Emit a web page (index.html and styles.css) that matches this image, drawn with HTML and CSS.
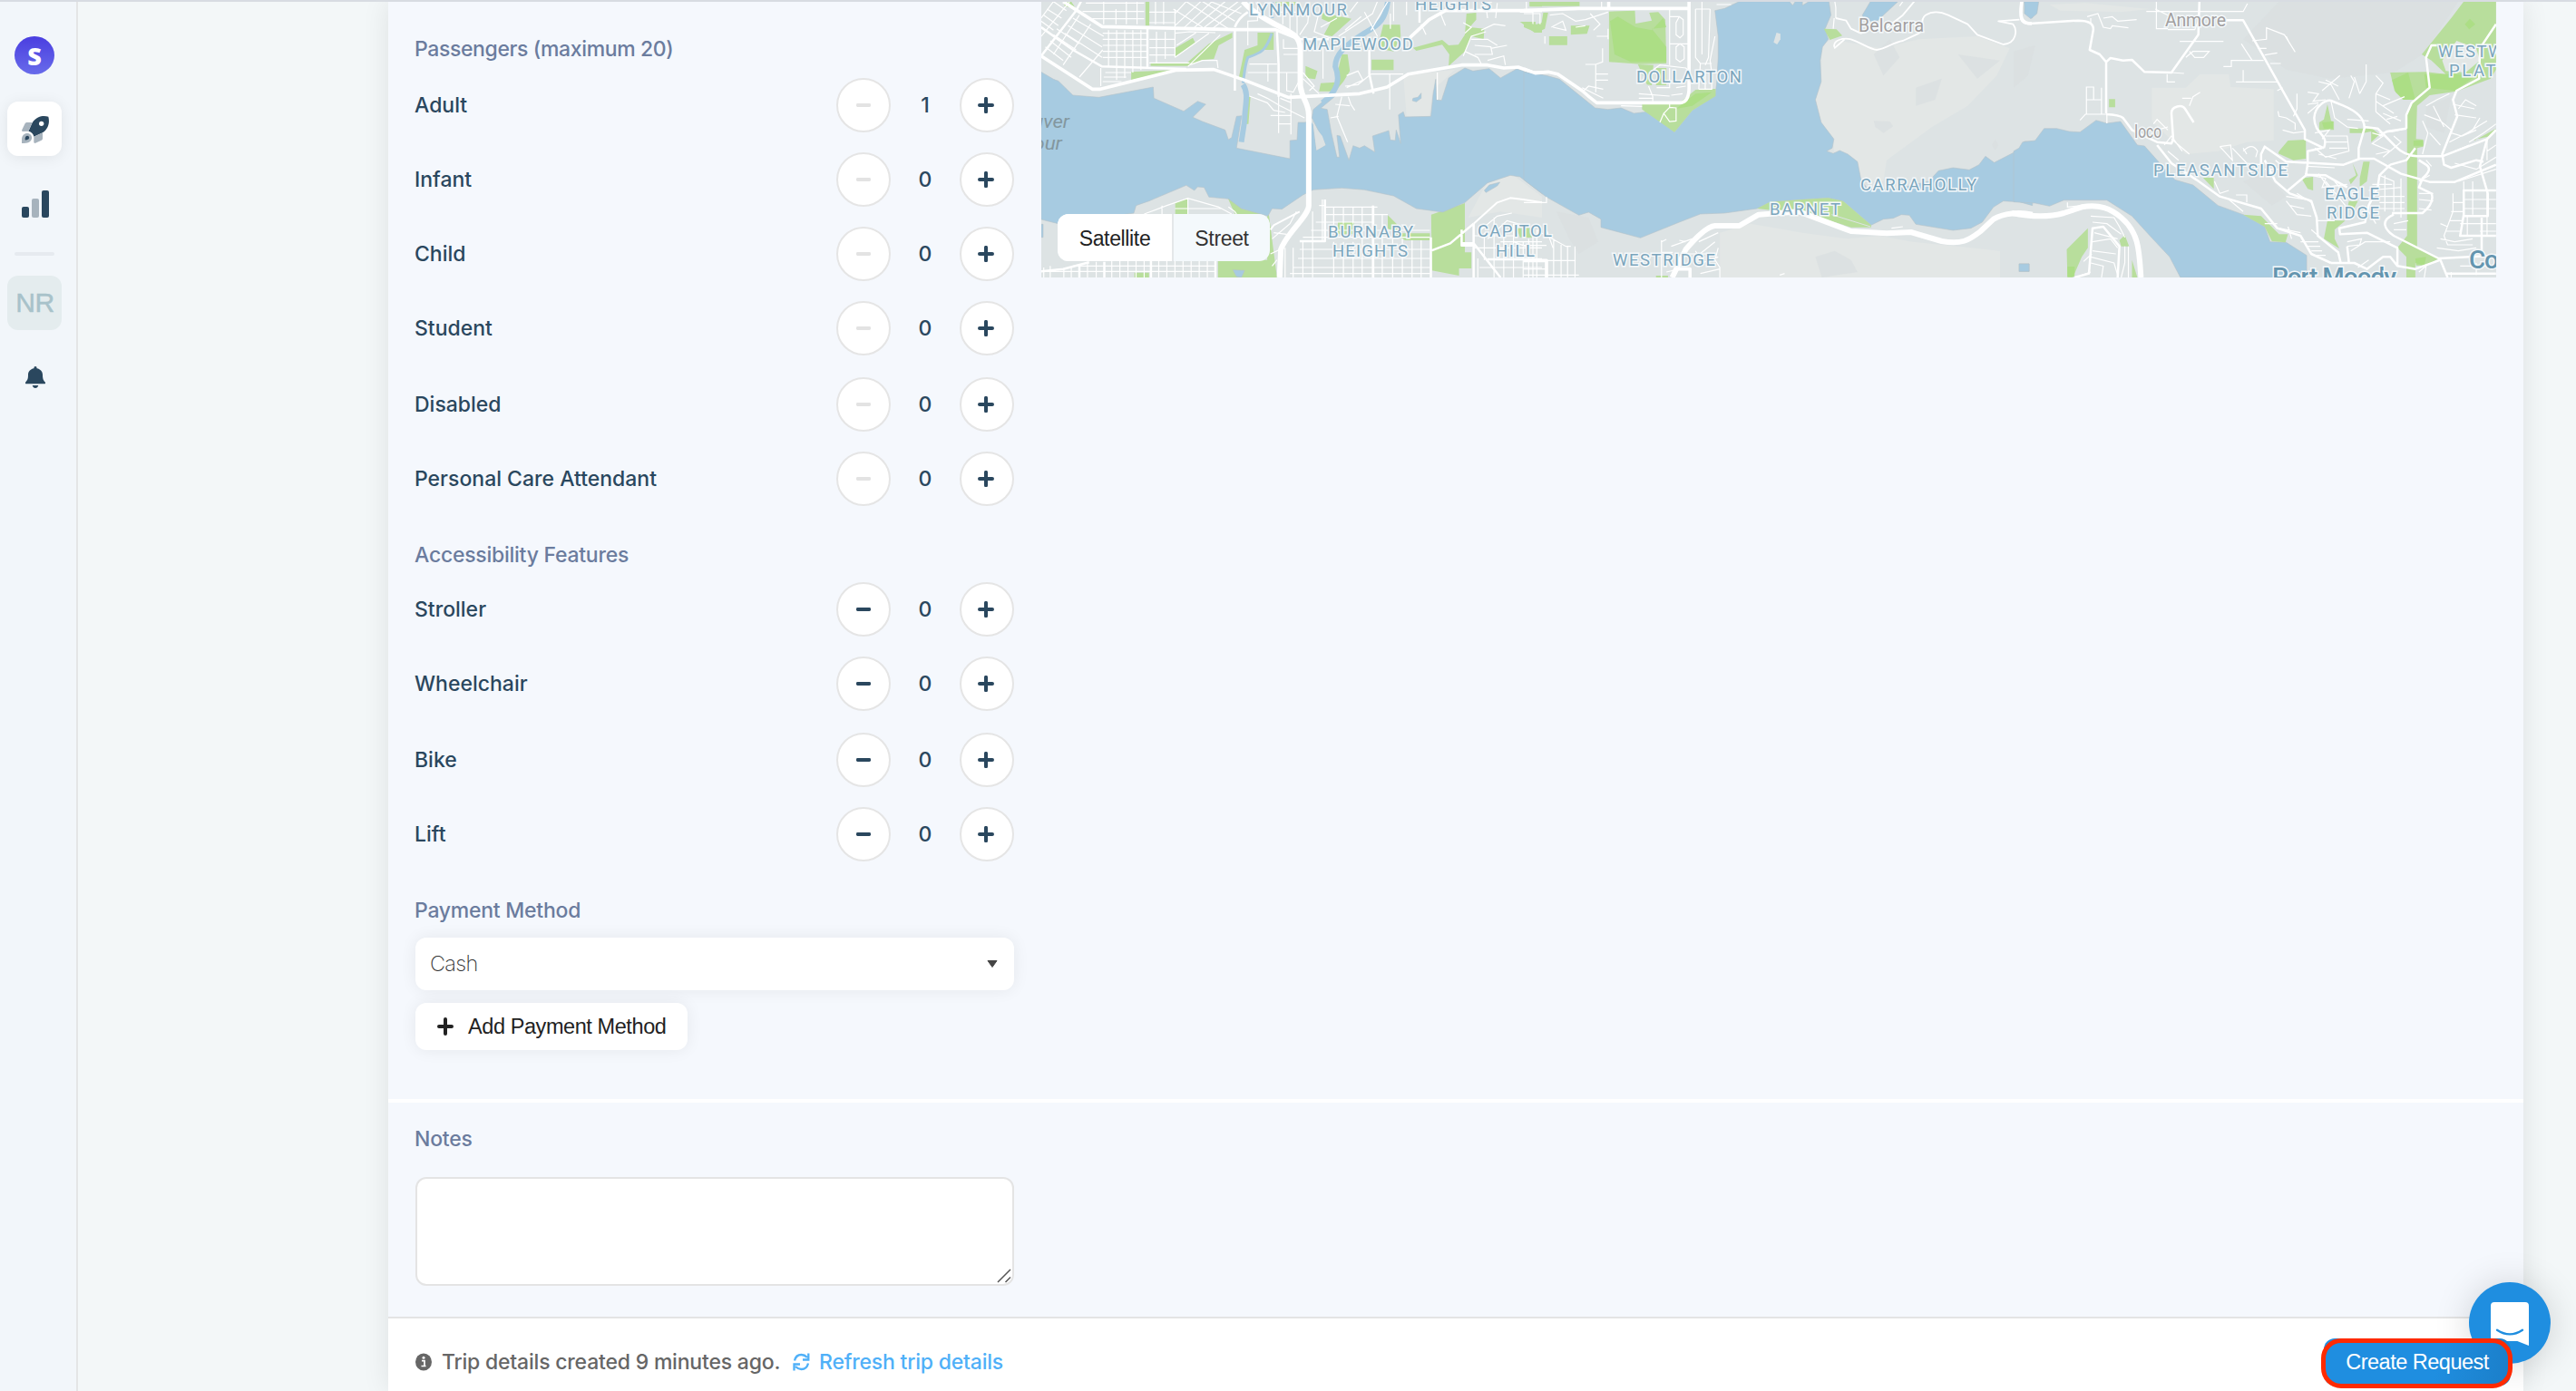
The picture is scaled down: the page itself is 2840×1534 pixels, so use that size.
FILE: index.html
```html
<!DOCTYPE html>
<html lang="en">
<head>
<meta charset="utf-8">
<title>Create trip request</title>
<link rel="stylesheet" href="styles.css">
</head>
<body>
<svg class="sprite" aria-hidden="true">
  <symbol id="plus" viewBox="0 0 18 18"><path d="M9 1.8v14.4M2 9h14" fill="none" stroke="currentColor" stroke-width="4" stroke-linecap="round"/></symbol>
  <symbol id="minus" viewBox="0 0 18 18"><rect x="1" y="7" width="16" height="4" rx="1.4" fill="currentColor"/></symbol>
</svg>
<div class="app">
  <nav class="sidebar">
    <div class="logo">S</div>
    <div class="tile tile-active">
      <svg width="30" height="30" viewBox="72 384 90 90"><path class="ink" d="M160 386C148 383 124 380 107 406L94 434C104 436 111 444 112 452L141 439C163 424 164 402 160 386Z"/><circle cx="137" cy="409" r="8" fill="#fff"/><g class="soft"><path d="M107 405H88Q84 406 82 410L72 431L74 435L94 434Z"/><path d="M141 439V458Q141 462 137 464L116 474L112 472V452Z"/><path d="M72 474V462C72 446 82 440 92 441C103 443 106 452 105 458C102 470 92 474 72 474Z"/></g><path class="ink" d="M83 463C82 454 85 449 91 449C97 450 98 456 95 460Q91 464 83 463Z"/></svg>
    </div>
    <div class="tile tile-chart">
      <svg width="30" height="30" viewBox="0 0 30 30"><rect class="ink" y="18" width="8" height="12" rx="2"/><rect class="soft" x="11" y="9" width="8" height="21" rx="2"/><rect class="ink" x="22" width="8" height="30" rx="2"/></svg>
    </div>
    <div class="rule"></div>
    <div class="tile tile-initials">NR</div>
    <svg class="bell" width="22" height="24" viewBox="84 1212 66 72"><path class="ink" d="M117 1212Q122 1212 122 1219C134 1221 141 1230 141 1240C141 1254 144 1260 149 1264Q152 1270 147 1270H87Q82 1270 85 1264C91 1258 93 1254 93 1240C93 1230 100 1221 112 1219Q112 1212 117 1212ZM107 1275H127C125 1281 122 1284 117 1284S109 1281 107 1275Z"/></svg>
  </nav>

  <main class="page">
    <section class="trip">
      <div class="form">
        <h3>Passengers (maximum 20)</h3>
        <div class="counters passengers">
          <div class="row"><span>Adult</span><button class="off"><svg><use href="#minus"/></svg></button><b class="one">1</b><button><svg><use href="#plus"/></svg></button></div>
          <div class="row"><span>Infant</span><button class="off"><svg><use href="#minus"/></svg></button><b>0</b><button><svg><use href="#plus"/></svg></button></div>
          <div class="row"><span>Child</span><button class="off"><svg><use href="#minus"/></svg></button><b>0</b><button><svg><use href="#plus"/></svg></button></div>
          <div class="row"><span>Student</span><button class="off"><svg><use href="#minus"/></svg></button><b>0</b><button><svg><use href="#plus"/></svg></button></div>
          <div class="row wide"><span>Disabled</span><button class="off"><svg><use href="#minus"/></svg></button><b>0</b><button><svg><use href="#plus"/></svg></button></div>
          <div class="row"><span>Personal Care Attendant</span><button class="off"><svg><use href="#minus"/></svg></button><b>0</b><button><svg><use href="#plus"/></svg></button></div>
        </div>
        <h3>Accessibility Features</h3>
        <div class="counters">
          <div class="row"><span>Stroller</span><button><svg><use href="#minus"/></svg></button><b>0</b><button><svg><use href="#plus"/></svg></button></div>
          <div class="row"><span>Wheelchair</span><button><svg><use href="#minus"/></svg></button><b>0</b><button><svg><use href="#plus"/></svg></button></div>
          <div class="row wide"><span>Bike</span><button><svg><use href="#minus"/></svg></button><b>0</b><button><svg><use href="#plus"/></svg></button></div>
          <div class="row"><span>Lift</span><button><svg><use href="#minus"/></svg></button><b>0</b><button><svg><use href="#plus"/></svg></button></div>
        </div>
        <h3>Payment Method</h3>
        <div class="select"><span>Cash</span><svg width="12" height="10" viewBox="0 0 12 10"><path d="M1 1.5h10L6 8.5Z" fill="#444" stroke="#444" stroke-linejoin="round"/></svg></div>
        <div class="add"><svg width="18" height="20" viewBox="0 0 18 20"><path d="M9 2v16M2 10h14" fill="none" stroke="#222" stroke-width="4" stroke-linecap="round"/></svg><span>Add Payment Method</span></div>
      </div>

      <div class="map">
        <svg class="map-canvas" width="1604" height="304" viewBox="1148 2 1604 304">
          <rect x="1148" y="0" width="1604" height="310" fill="#dde3e4"/>
          <!-- west: North Vancouver and Burnaby Heights -->
          <g transform="translate(1140 0) scale(.357143 .333333)">
            <path class="relief" d="M1140 250L1300 230 1230 300 1220 385 1150 385ZM1400 600L1480 580 1568 650V720L1440 700 1340 720Z"/>
            <g class="park">
              <path d="M90 5H115L130 30 95 20ZM344 5H356V85H344ZM435 160L490 125 498 142 435 188ZM612 108V125L570 150 555 195 520 198 475 218H360V210H470L540 145ZM300 238L430 232 300 265ZM690 108H740V165H710L660 190 648 258H632L650 165 690 150ZM745 5H812L800 22 750 20ZM890 42L980 62 920 120 895 115 915 75 888 62ZM1078 82L1130 82 1132 120 1110 170 1060 160ZM1042 197H1110V232H1042ZM838 218L875 235 868 262 838 258ZM885 275L930 272 950 180 968 180 975 235 955 270 930 302H880ZM1170 158L1260 132 1280 150 1310 148 1330 115 1335 45 1365 42V65L1345 90 1390 95 1388 130 1350 120 1330 170 1280 218 1282 180 1260 148 1180 168ZM1500 72H1548L1550 90 1568 85V108H1545ZM1530 5H1568V22H1530Z"/>
              <path d="M660 315L668 322 662 410H655ZM436 672L475 655 476 708H436ZM598 655L628 660 640 690 725 710 750 918H568V860H720V708H620ZM310 902H355V918H310ZM938 735H988V775H938ZM1092 712L1130 752V772H1222V795H1145L1092 755ZM1226 710L1330 672V835H1350V888H1312V912L1228 895ZM1490 755H1536V785H1500Z"/>
            </g>
            <path class="water" d="M22 238L60 262 75 268 120 315 200 322 368 288 370 325 462 368 505 335 530 345 490 388 520 402 590 430 600 462 610 455 625 385 641 383 625 490 790 525 790 465 812 463 815 405 835 405 860 400 872 497 900 480 858 390 862 362 915 315 930 318 885 358 905 362 918 440 935 520 943 520 935 448 945 450 972 530 985 482 1005 490 1020 482 1052 503 1045 450 1095 432 1100 463 1115 465 1118 430 1132 475 1125 380 1140 370 1145 387 1225 385 1232 312 1240 262 1242 330 1258 332 1280 258 1330 225 1355 235 1405 227 1440 258 1490 228 1540 245 1570 243V642L1500 585 1470 580 1400 605 1330 670 1262 702 1180 690 1110 648 1020 628 950 622 862 628 830 645 765 692 735 690 722 715 640 690 600 658 540 652 525 620 505 618 495 630 470 613 355 665 315 680 308 705 75 740 22 726Z"/>
            <path class="land" d="M835 395H860L872 497 900 480 890 450 845 390Z"/>
            <path class="water" d="M1170 325L1185 322 1195 308 1195 325 1180 337 1168 333ZM1390 630L1405 612 1438 603 1430 615 1395 637ZM614 893L650 895 640 918 625 915ZM22 742H28V785H22Z"/>
            <path class="river" d="M736 5V60M734 110C715 170 700 175 660 190C650 220 650 240 645 275" style="stroke-width:3"/><path class="river" d="M645 280C665 310 650 350 650 400L640 470M1092 5C1085 60 1070 80 1020 110C960 150 930 180 930 220C945 260 940 300 890 340"/>
            <g class="street">
              <path d="M22 60L60 5M22 120L110 5M60 180L140 50M90 215L175 80M140 255L212 165M60 5L100 35M40 30L85 60M30 50L75 85M22 70L60 100M70 95L140 145M60 115L130 165M50 135L115 190M35 155L90 200M120 60L215 120M105 85L210 155M95 110L210 190"/>
              <path d="M160 10H340M150 38H340M180 62H340M212 110H348M212 130H348M212 150H348M212 170H348M212 190H348M220 240H300M215 255H285M212 270H270M215 5V80M253 30V80M285 5V80M318 5V80M230 100V220M255 100V265M280 100V258M305 100V240M330 100V232M375 5V80M400 5V80M356 40H435M356 75H435M378 105V210M405 105V195M435 30V190M356 130H435M356 158H435M356 182H435M356 208H480"/>
              <path d="M435 85L515 5M435 45L470 5M460 95L550 5M490 95L590 5M520 95L630 5M550 95L640 20M430 30L520 90M470 5L600 95M520 5L620 70M545 5L640 45M435 110L480 105 560 108M435 190L540 110M475 220L575 115M480 215L520 200H565L568 225M440 150L500 108M206 225V285"/>
              <path d="M660 150V70L690 68V5M768 5V80M790 5V110M812 5V120M745 40H850M850 20L845 75 820 115M880 40L865 105 925 130M770 130V160H820M770 180H820M665 212H750M722 212V270M660 240H820M780 240V300L800 305 822 260M755 280V440M793 310V445M690 310L720 325 760 350 835 390M665 318L720 340 740 365 775 372M730 382H795M753 410H793M760 325L795 340M892 160V260M885 90L935 60M960 100L1010 55M940 120L1045 45 1060 5M1000 5L975 40M1040 100L1092 5M1020 40L1060 120M1098 245V362M1040 245H1140M1100 45V95M965 250L1000 235 1015 265 965 290M960 285L1000 280 1040 245M970 320L978 345 990 365M950 320L935 385 968 470M930 345L975 350M915 390L940 385M1110 5V70M1150 5V50M1245 240V330M830 260L880 310M830 240L865 285 850 300"/>
              <path d="M1195 80L1210 115M1255 45L1270 85M1395 20L1400 60M1430 10L1425 60M1330 110L1350 90 1325 75M1380 100L1420 80 1455 85M1350 130L1400 130 1430 150M1330 170L1370 190 1380 210M1360 150L1410 155 1415 180 1360 180M1410 160L1460 150M1400 200L1450 185 1455 215M1325 185L1350 120 1395 105M1500 40H1540V80M1520 5V40"/>
              <path d="M340 708L410 680 475 656 570 685 610 708M395 680V708M475 656V708M435 690H580M600 685L620 700 625 708M30 885V918M50 880V918M92 888V918M115 882V918M165 870V918M192 866V918M240 864V918M265 864V918M290 864V918M315 864V918M340 864V918M385 864V918M410 864V918M435 864V918M460 864V918M485 864V918M510 864V918M535 864V918M120 880H560M30 898H560"/>
              <path d="M898 685H1060M898 710H1092M870 735H1050M855 762H1222M830 785H1222M820 825H1222M815 855H1222M800 885H1222M790 905H1222M925 685V762M955 685V740M985 685V740M1013 685V918M1045 680V918M1075 710V918M925 800V918M955 800V918M985 800V918M1107 780V918M1137 790V918M1167 795V918M1195 795V918M830 800V918M860 700V918M890 660V800M880 680H898M775 820V918M800 820V918M1390 770V860M1420 720V918M1450 760V918M1480 800V918M1510 800V918M1540 760V918M1355 820H1568M1355 780H1490M1375 885H1568M1390 850L1440 918M1380 760L1430 715 1475 705M1400 790L1460 730 1510 745M1440 800H1568M1370 855V918M1480 740V800L1530 820M735 790L790 740 810 700M740 770L780 775M730 840L770 820M735 880L750 860"/>
            </g>
            <g class="road">
              <path d="M22 185L130 35 145 5M22 90L120 165 210 220 470 228M350 95V222M620 100V300M620 90Q630 60 660 40M750 105L755 215 755 320M1035 165V245L1048 310M815 130H910M1190 5V75M22 898L90 890 170 868M140 880V918M217 866V918M361 864V918M560 864V918M820 798H898V660M1047 680V918M1225 785V918M1357 740V918M1320 805H1357M1357 740L1285 805 1225 830M1357 805L1440 918M1357 812H1320V760M1400 858H1568"/>
              <path d="M820 700L740 745 730 760M1568 670L1510 660 1470 655 1430 670 1357 740" style="stroke-width:2"/>
            </g>
            <g class="main-road">
              <path d="M90 5L210 88 620 98H745L820 130M22 185L180 295H205L440 232 555 230 650 265 785 322 1005 310 1090 288 1155 245 1320 215H1400L1450 225 1495 222 1540 240 1570 240M1160 125L1220 65 1270 35H1568"/>
            </g>
            <path class="highway" d="M645 5C665 30 690 50 740 78C800 110 822 120 822 165V285C828 330 848 340 848 380V680C848 715 780 770 762 825L758 918"/>
          </g>
          <!-- centre: Dollarton, Indian Arm and Belcarra -->
          <g transform="translate(1680 0) scale(.357143 .333333)">
            <path class="relief" d="M950 130L1100 160 1220 130 1400 120 1500 160 1460 250 1370 350 1260 420 1120 530 1110 600 1035 600 1030 535 957 500 957 460 918 405 900 330 918 260 920 150ZM605 770L700 740 860 770 1000 790 1100 780 1200 800 1380 820 1470 830V918H605Z"/>
            <path class="relief-dark" d="M1080 400L1130 402 1140 418 1110 440 1085 420ZM1445 480L1455 462 1465 480 1455 497ZM900 850L960 830 1010 860 1030 900 920 918ZM100 700L200 720 230 800 170 840 140 790ZM1080 180L1130 130 1160 190 1110 250ZM1210 290L1290 260 1270 330 1210 350ZM1340 180L1470 200 1400 260Z"/>
            <path class="water" d="M0 238L70 250 110 262 220 357 260 362 300 357 340 375 380 370 465 437 520 365 590 318 595 280 600 190 600 120 590 35 620 28 665 5H820L830 18 838 5H860V18L880 5H942L948 50 930 95 940 130 922 155 915 200 918 270 900 330 918 405 957 460 952 490 935 500 955 508 975 498 1000 510 1030 535 1040 590 1060 625 1150 625 1250 600 1280 565 1325 555 1375 562 1405 545 1425 517 1452 538 1530 495 1545 468H1570V680L1530 668 1480 665 1450 685 1415 735 1380 755 1325 762 1210 742 1190 712 1165 710 1140 722 1110 725 1072 745 985 665 940 655 860 660 760 668 720 690 620 705 545 708 480 735 360 787 238 752V725L200 702 170 712 70 652 0 595ZM1070 5L1045 50 1050 62 1085 75 1155 5ZM1545 5H1570V60L1550 45ZM1530 873H1560V898H1530Z"/>
            <path class="land" d="M780 108L792 112 792 130 782 147 771 140Z"/>
            <path class="park" d="M18 5H172V20H18ZM60 42H75L65 95 40 108 0 90V72L35 82 55 75ZM145 85H203L195 112 145 115ZM78 120H134V149H78ZM263 38L343 35 345 78 395 68 387 42 415 40 437 65 440 210 360 212 263 205ZM352 213L400 215 395 282 380 280ZM408 225H440V282H408ZM365 345H475L530 297 592 294V318L520 365 465 437 365 362ZM926 95L965 97 983 118 945 132ZM720 690L760 668 860 660 940 655 985 665 1072 745V752H1010L880 708 800 700ZM8 755H25V785H8ZM408 912H445V918H408Z"/>
            <path class="park-dark" d="M266 70L280 180 330 205 440 205V155L395 95 440 90 430 60 395 100 345 90 290 55ZM470 360L530 310 580 305 520 350Z"/>
            <g class="street">
              <path d="M450 30V215M480 55L470 75V115L482 125 492 115V65ZM482 145L470 155V195L482 205 495 195V155ZM450 145H510M530 30V190L545 210 540 295M550 5V180M575 30L570 190 560 215M590 120L575 200 580 240M545 210H580M540 240H590M540 295H580V240M560 240V295M450 55H480M530 30H575M595 15H640"/>
              <path d="M80 50L120 45 160 70 190 65M85 90L120 70 130 100 90 90M160 90L190 85M205 45L235 80 215 100M190 65L260 40M0 45H50V80M225 120H260M243 160V205L222 213M190 213H222V305M222 245H260M222 265H260M180 290L245 325M185 300L200 285 245 295M240 5V25M260 95V130M65 120V145M355 310L450 318M385 285L398 320V335M400 230L420 215 500 225 515 240M410 290H450V225M470 290L500 285M470 270L515 255M355 325H400M455 315L490 310M300 350L365 352"/>
              <path d="M450 345V355L470 357V400L450 402 432 375 450 355M432 375L420 405M1170 5L1160 20M958 60L955 95M960 5L963 25V60M1135 755L1170 750"/>
              <path d="M0 670H70V652M40 760V918M70 760L90 820M92 790V918M115 810V918M135 815V918M158 815V918M45 862H160M0 890H70M0 910H170M15 790V918M40 762L130 815H145M0 812H70M425 795V918M425 800L440 792M425 835H460M455 815L520 790M540 800L600 770M480 795L500 800M520 860L590 800M530 830L550 870 600 850M545 905L605 890M440 900L480 890M500 840H570M600 820L590 860 605 885V918M790 910L805 905"/>
            </g>
            <path class="road" d="M958 155C955 130 990 125 1010 130C1040 140 1070 165 1090 165C1120 160 1140 140 1170 135L1210 115C1250 100 1215 70 1240 50C1270 30 1300 45 1310 50L1370 80 1400 115 1480 147C1520 145 1525 100 1510 80L1465 70 1530 65M963 60L995 68 1010 95 1040 110 1060 105M1205 5L1170 50 1110 100M958 160L990 130" style="stroke-width:1.8"/>
            <path class="road" d="M950 710L1070 750" style="stroke-width:1;stroke:#dde3e4"/>
            <path class="main-road" d="M0 35L170 28H510V290Q510 340 480 340H225Q200 320 180 300L105 245 75 238 35 242 0 228M510 5V35M262 5V25M1537 5C1530 60 1535 78 1568 78M0 862H70V918M470 890H513V918"/>
            <path class="highway" d="M458 918L500 825Q560 750 590 747H665L725 710 850 700 1010 765 1120 772 1195 768 1290 798C1350 810 1375 795 1410 765L1450 725C1480 705 1530 700 1570 710"/>
          </g>
          <!-- east: Anmore, Ioco and Port Moody -->
          <g transform="translate(2220 0) scale(.395408 .333333)">
            <path class="relief" d="M385 290H480L520 245 600 245 605 288 725 295V465L650 470 570 500 480 510 385 400ZM100 15L200 10 380 30 300 40 130 35Z"/>
            <path class="relief-dark" d="M640 130L740 5H1240L1170 130 1140 180 1060 240 880 260 760 230 690 170ZM640 600L700 570 760 650 720 680ZM0 170L60 150 40 250 0 290ZM1150 350L1220 320 1200 440 1150 420Z"/>
            <path class="water" d="M0 500L15 490 25 470 60 465 85 425 120 425 155 435 185 437 230 398 260 408 298 402 345 480 365 483 430 570 450 595 500 612 570 680 640 710 700 750 715 800 760 802 817 845V918H465L435 850 380 780 330 715 260 662 140 662 100 682 60 672 0 668ZM30 5H70L65 45 48 62 30 45ZM15 873H43V898H15Z"/>
            <path class="park" d="M1255 5H1345V230L1330 260 1235 302 1160 315 1125 350 1122 460 1142 462V485L1125 490V820L1185 855 1150 880 1120 870V918H1095V850L1070 820 1097 780V380L1115 330H1085L1062 300 1050 240 1150 238 1205 245 1165 200 1138 180 1220 60ZM266 328H283V355H266ZM875 345L885 400 893 402V430H852V405L865 395ZM937 425H1000L1020 445 997 470V435L975 440H937ZM740 500L765 465 815 462V525L780 530 738 508ZM803 590L835 585V630L820 625ZM945 540L960 580 940 610 935 595 955 580ZM975 535H993L985 600 965 618V590ZM935 665H960L945 700 930 690ZM875 730H925L895 760V790L908 822 865 790ZM640 710L690 715 740 775H765L758 802 720 798 700 750ZM528 588H558V625ZM207 755V820L190 850 165 918H150L148 825ZM295 795L310 778 322 815H300ZM330 860L345 918H330ZM1285 465L1345 425 1330 450 1285 462Z"/>
            <path class="park-dark" d="M1055 265L1100 240 1120 330 1088 330 1065 305ZM1145 245H1220L1290 250 1230 300 1150 290ZM1258 80L1272 62 1287 80 1270 97ZM860 405L890 402V425H865ZM1115 465H1142V482H1115ZM1120 855L1150 850 1145 878H1122ZM150 882H170V915H150Z"/>
            <path class="relief" d="M1195 200L1235 135 1290 160 1300 200 1260 240 1205 235Z"/>
            <g class="street">
              <path d="M370 38H640L652 12M398 5V95L430 95M430 98H505L518 60M395 30L430 50M205 55L235 45 250 90 270 95 275 85 320 92M250 60L275 55 290 70 343 65M215 80V60M463 137H585M480 190L500 170H545L530 190H505L490 170M635 145L665 200M585 220H607V200H697M620 271H735M640 232V271M428 245V271H450M680 160H705M665 135L705 130V92L755 115 785 172M760 120L770 145M700 182L735 175M715 210H745M440 240L475 243M203 288H223V330H203ZM203 330V378M245 290V378M210 330H245M260 378V408M185 398L200 378H260"/>
              <path d="M737 368L740 385 760 390 785 408V430M790 310V360L780 385M735 300L750 290M750 430L780 440 812 435M820 305L850 310 835 335 870 330M850 270L885 280 908 330M870 265L905 285M860 300L910 250M820 345L850 340M820 375L850 345M935 325L950 270 940 250M965 310L950 255M983 213V270L965 310M1010 250L1030 275 1010 310 1010 370M1010 310L1050 330M1030 350L1090 320M1010 335L1060 375M1030 375L1080 400M1040 395L1070 385M1010 370L1050 410M885 335L895 390 930 420 960 425M930 395L990 400M840 440L880 430 860 460M870 450L930 450 935 500 870 520 840 490M870 470H930M880 490H930M850 510L900 525M1000 440L1030 450 1000 475 1050 500 1010 510M1020 440L1060 435 1095 425M1060 450L1080 470 1030 520"/>
              <path d="M575 485L610 530 605 480 575 485M610 490L650 540 690 545M640 500Q665 470 680 500L675 520M650 510L640 490M700 560H760M730 530L760 560M820 550L895 555M830 580L870 590 860 620 930 610M850 575L890 640M870 600L925 680M895 600L930 650M790 640L830 670M760 650L815 660M770 680L810 690M760 665L790 710 830 715M845 730H895M800 800H850M820 815H855M830 830H860M840 845H870M850 780L830 760M620 645H650V670M600 660L640 700M560 600L575 640 600 630M390 410L400 395 430 430M400 430L430 420M430 500L460 530M420 480L440 450 470 500M440 460L490 510M490 350L500 320 520 305M470 325H495"/>
              <path d="M215 715L280 720 295 750 310 785M220 735L260 740 300 775M225 770L290 790M220 800L270 790 290 820M220 830L285 840M215 850L280 870 290 910M215 870L250 880 245 918M320 815V918M310 815V870L300 918M190 910L215 900M195 865L218 840M150 670V685L190 680"/>
              <path d="M1150 350L1180 330 1215 310M1145 380L1190 400 1220 430M1170 350L1200 420M1140 400L1155 440 1140 510M1160 440L1190 480M1225 345L1285 360M1230 380L1290 390M1240 360L1260 330 1290 350M1220 440L1250 450 1290 430M1215 470L1280 430 1300 390M1250 450L1320 400M1270 470L1310 440 1345 410M1230 500L1270 480M1150 530L1165 550M1020 580L1060 600V700M1035 580V700M1080 590V720M1000 610H1055M990 630L1080 620M1020 650H1090M1020 670H1090M1020 690H1090M1060 740L1100 730M1060 760H1095M990 700L1010 740M1130 640H1170M1130 660L1170 665M1130 690L1165 695M1130 600L1160 580"/>
              <path d="M1225 640V700L1200 780 1210 810H1280M1225 670H1255M1220 700H1255M1215 730H1250M1205 765H1245M1190 740L1210 750M1255 600V640M1280 600V630M1255 660H1300M1255 690H1300M1280 630V710M1320 630V780M1300 660H1345M1300 690H1345M1300 740H1345M1300 765H1345M1245 740H1300M1265 715V780M1180 820L1240 830 1290 820M1190 790L1230 800 1280 790M1240 600L1345 560M1230 540L1290 560 1345 520M1320 460V530M1320 500L1345 480M1130 900L1150 880 1145 918M930 800L970 790 965 810 930 815M940 830L980 800 1050 800M960 885L990 860M1220 900V918M1245 880H1345M1290 910V870M765 750L775 790M740 755L800 770M700 740H735"/>
            </g>
            <g class="road">
              <path d="M22 5C18 60 15 78 45 78L180 68Q225 68 222 100L212 165 240 180 258 205V375M258 205L270 192 305 200 330 198 365 238 440 240 515 115 518 5M590 67H640L812 430V460L865 490M258 378Q295 380 305 390L330 430 400 470 440 475 445 460 440 375C440 350 470 345 478 360L502 405M400 480L440 540 510 595 575 650 690 690 735 755 800 780 830 840 885 870M690 545V510L700 485 760 535 920 545 965 525H1005L1080 575 1160 602H1230L1345 545"/>
              <path d="M865 490C880 440 840 450 838 390C840 350 870 330 885 333L920 350Q980 380 978 425L962 490V525M978 420L1015 425 1065 485Q1090 515 1125 517H1195L1320 460 1345 430M820 540V500L860 490M820 540L815 580 765 630M700 530L730 600 770 640 830 665 845 720 848 780 905 835 912 870M812 578L870 580 930 620"/>
              <path d="M1345 80L1300 160 1298 260 1235 300 1225 330 1237 385 1195 510 1200 545 1220 555 1290 530 1310 535M1320 460L1300 550 1322 640V715H1255V630H1345M1050 545L1020 580 1015 620 990 680 980 735 908 755 910 775 985 770 1070 820 1070 880M1050 545L1095 530 1120 490M1055 705H1140Q1175 670 1165 640L1130 620 1140 590Q1170 560 1150 545L1130 530M1060 710C1020 730 1035 760 1060 780L1185 855 1345 845M1255 630V710L1245 780H1345M1305 720V840M885 870H950L985 890 1030 850H1050L1070 880 1120 890 1190 860 1210 918M930 815L935 870M1205 905H1345M170 918L210 905 220 755 250 750 295 815 290 918M1095 425L1040 435 1020 450M1095 425V380L1110 340 1160 290 1150 190 1165 150 1180 150"/>
            </g>
            <path class="highway" d="M-5 705C60 720 110 715 140 705L190 685C240 675 270 690 300 720C350 770 350 830 355 918"/>
          </g>
          <g class="labels">
            <text x="1377" y="17" textLength="108">LYNNMOUR</text>
            <text x="1560" y="11" textLength="84">HEIGHTS</text>
            <text x="1436" y="55" textLength="122">MAPLEWOOD</text>
            <text x="1464" y="262" textLength="94">BURNABY</text>
            <text x="1469" y="283" textLength="83">HEIGHTS</text>
            <text x="1629" y="261" textLength="82">CAPITOL</text>
            <text x="1649" y="283" textLength="43">HILL</text>
            <text x="1804" y="91" textLength="116">DOLLARTON</text>
            <text x="2051" y="210" textLength="128">CARRAHOLLY</text>
            <text x="1951" y="237" textLength="78">BARNET</text>
            <text x="1778" y="293" textLength="113">WESTRIDGE</text>
            <text x="2374" y="194" textLength="148">PLEASANTSIDE</text>
            <text x="2563" y="220" textLength="60">EAGLE</text>
            <text x="2565" y="241" textLength="58">RIDGE</text>
            <text x="2688" y="63" textLength="114">WESTWOOD</text>
            <text x="2700" y="84" textLength="94">PLATEAU</text>
            <g class="place"><text x="2049" y="35" textLength="72">Belcarra</text><text x="2387" y="28.500" textLength="67">Anmore</text><text x="2353" y="152" textLength="30" lengthAdjust="spacingAndGlyphs">Ioco</text></g>
            <g class="sea"><text x="1115" y="141" textLength="64" lengthAdjust="spacingAndGlyphs">couver</text><text x="1127" y="164.500" textLength="44" lengthAdjust="spacingAndGlyphs">bour</text></g>
            <g class="city"><text x="2505" y="315" textLength="137">Port Moody</text><text x="2722" y="296" textLength="118">Coquitlam</text></g>
          </g>
        </svg>
        <div class="toggle"><span class="sat">Satellite</span><span class="str">Street</span></div>
      </div>
    </section>

    <section class="notes">
      <h3>Notes</h3>
      <div class="textarea"><svg width="16" height="16" viewBox="0 0 16 16"><path d="M1 15L15 1M9.500 15L15 9.500" stroke="#555" stroke-width="1.5"/></svg></div>
    </section>

    <footer class="footer">
      <svg width="18" height="20" viewBox="0 0 18 20"><ellipse cx="9" cy="10" rx="9" ry="9.600" fill="#666"/><path d="M7 8.700h3v5.300M6.500 14.500h5" fill="none" stroke="#fff" stroke-width="1.700"/><circle cx="9" cy="5.300" r="1.500" fill="#fff"/></svg>
      <span class="created">Trip details created 9 minutes ago.</span>
      <svg class="refresh" width="19" height="20" viewBox="0 0 19 20"><path d="M2 8.500C3 4 6 2 9.500 2 12 2 14 3 16 5M17.300.5V7.500H11M17 11.500C16 16 13 18 9.500 18 7 18 5 17 3 15M1.500 19.500V12.500H8" fill="none" stroke="#4fb0f8" stroke-width="2.300"/></svg>
      <a>Refresh trip details</a>
      <div class="chat"><svg width="42" height="48" viewBox="738 168 126 144"><path d="M750 168H852Q864 168 864 180V312L826 297H750Q738 297 738 285V180Q738 168 750 168Z" fill="#fff"/><path d="M759 260Q801 288 843 260" fill="none" stroke="#1f8ee0" stroke-width="7" stroke-linecap="round"/></svg></div>
      <div class="create">Create Request<i class="highlight"></i></div>
    </footer>
  </main>
</div>
</body>
</html>
```
FILE: styles.css
```css
* { box-sizing: border-box; }
body {
  margin: 0;
  background: #f3f7f8;
  font-family: Inter, "Liberation Sans", sans-serif;
  font-size: 23px;
  overflow: hidden;
}
.sprite { display: none; }
.app {
  display: flex;
  height: 1534px;
  border-top: 2px solid #d8dce2;
}

/* sidebar */
.sidebar {
  width: 86px;
  padding: 38px 0 0 8px;
  border-right: 2px solid #e4e5e6;
  background: #f2f6fa;
  display: flex;
  flex-direction: column;
  align-items: flex-start;
}
.ink { fill: #2a475e; }
.soft { fill: #a7b3bd; }
.logo {
  width: 44px;
  height: 42px;
  margin: 0 0 30px 8px;
  border-radius: 50%;
  background: linear-gradient(#4a3ee0, #686bea);
  color: #fff;
  font: 800 27px/43px "Open Sans", sans-serif;
  text-align: center;
}
.tile {
  width: 60px;
  height: 60px;
  border-radius: 12px;
  display: flex;
  align-items: center;
  justify-content: center;
}
.tile svg { margin-left: 2px; }
.tile-active {
  background: #fff;
  box-shadow: 0 2px 16px rgba(0, 0, 0, .08);
}
.tile-active svg { margin-top: 2px; }
.tile-chart { margin-top: 23px; }
.rule {
  width: 44px;
  height: 4px;
  margin: 23px 0 22px 8px;
  border-radius: 2px;
  background: #e6eaef;
}
.tile-initials {
  background: #e4ecee;
  color: #a8c2ca;
  font: 30px/60px "Liberation Sans", sans-serif;
  letter-spacing: -.5px;
  padding-left: 1px;
  -webkit-text-stroke: .5px #a8c2ca;
}
.bell { margin: 40px 0 0 20px; }

/* page */
.page {
  width: 2354px;
  margin-left: 342px;
  background: #f5f8fd;
  box-shadow: 0 0 28px rgba(0, 0, 0, .09);
  clip-path: inset(0 -58px);
}
.trip {
  height: 1214px;
  padding: 0 30px;
  border-bottom: 4px solid #fff;
  display: flex;
  gap: 30px;
}
.form { width: 660px; padding-top: 38px; }
h3 {
  margin: 0 0 16px;
  height: 28px;
  font-size: 23px;
  line-height: 28px;
  font-weight: 450;
  letter-spacing: -.25px;
  text-indent: -1px;
  color: #6b7c9e;
}
.form h3:first-child { margin-bottom: 18px; letter-spacing: -.38px; }
.counters { margin-bottom: 40px; }
.row {
  display: grid;
  grid-template-columns: 1fr 60px 76px 60px;
  align-items: center;
  height: 60px;
  margin-top: 22px;
  color: #2a475e;
  font-weight: 500;
  text-indent: -1px;
}
.row:first-child { margin-top: 0; }
.row.wide { margin-top: 24px; }
.row b { font-weight: 500; text-align: center; text-indent: 0; }
.row button {
  width: 60px;
  height: 60px;
  padding: 0;
  border: 2px solid #e5e5e5;
  border-radius: 50%;
  background: #fff;
  color: #2a475e;
}
.row b + button { padding-right: 2px; }
.row button svg { display: block; width: 18px; height: 18px; margin: 0 auto; }
.row button.off { color: #e3e3e3; }
.select {
  height: 58px;
  padding: 0 18px 1px 16px;
  border-radius: 12px;
  background: #fff;
  box-shadow: 0 0 18px rgba(0, 0, 0, .07);
  display: flex;
  align-items: center;
  justify-content: space-between;
  font-weight: 200;
  font-size: 23.500px;
  letter-spacing: -.7px;
  color: #333;
}
.add {
  width: 300px;
  height: 52px;
  margin-top: 14px;
  padding-left: 24px;
  border-radius: 12px;
  background: #fff;
  box-shadow: 0 0 18px rgba(0, 0, 0, .07);
  display: flex;
  align-items: center;
  gap: 16px;
  font: 23.500px "Liberation Sans", sans-serif;
  letter-spacing: -.42px;
  color: #222;
  white-space: nowrap;
}

/* map */
.map { position: relative; width: 1604px; height: 304px; overflow: hidden; }
.map-canvas { display: block; }
.map-canvas path { vector-effect: non-scaling-stroke; }
.water { fill: #a7cbe1; stroke: #b5c3ca; stroke-width: .6; }
.land { fill: #dde3e4; }
.park { fill: #b8de9c; }
.park-dark { fill: #a9dd80; opacity: .8; }
.relief { fill: #e3e7e6; }
.relief-dark { fill: #d9dfe0; opacity: .75; }
.river { fill: none; stroke: #a7cbe1; stroke-width: 6; }
.street path { fill: none; stroke: #fff; stroke-width: 1.2; }
.road, .road path { fill: none; stroke: #fff; stroke-width: 2.5; stroke-linejoin: round; }
.main-road, .main-road path { fill: none; stroke: #fff; stroke-width: 3.6; stroke-linejoin: round; }
.highway { fill: none; stroke: #fff; stroke-width: 6; stroke-linejoin: round; }
.labels text {
  font-family: Roboto, sans-serif;
  font-size: 18.500px;
  fill: #7ba5bc;
  stroke: #f4f8fa;
  stroke-width: 3px;
  paint-order: stroke;
}
.labels .place text { font-size: 19.500px; fill: #a29fa0; }
.labels .sea text { font-size: 20.500px; font-style: italic; fill: #83979f; stroke: none; }
.labels .city text { font-size: 28px; font-weight: 500; fill: #6495af; }
.toggle {
  position: absolute;
  left: 18px;
  top: 234px;
  display: flex;
  width: 234px;
  height: 52px;
  border-radius: 12px;
  overflow: hidden;
  background: #f4f9fc;
  font: 23px/54px "Liberation Sans", sans-serif;
  letter-spacing: -.35px;
  color: #333;
  text-align: center;
}
.sat { width: 128px; background: #fff; border-right: 2px solid #e4e7e9; color: #222; }
.str { flex: 1; }

/* notes and footer */
.notes { height: 236px; padding: 26px 30px 0; }
.notes h3 { margin-bottom: 28px; }
.textarea {
  width: 660px;
  height: 120px;
  border: 2px solid #e4e4e4;
  border-radius: 12px;
  background: #fff;
  display: flex;
  align-items: flex-end;
  justify-content: flex-end;
  padding: 0 1px 1px 0;
}
.footer {
  position: relative;
  height: 82px;
  border-top: 2px solid #e4e4e4;
  background: #fff;
  padding: 0 14px 0 30px;
  display: flex;
  align-items: center;
  color: #666;
  font-weight: 450;
  letter-spacing: -.2px;
}
.footer > svg, .footer > span, .footer > a { margin-top: 16px; flex: none; white-space: nowrap; }
.created { margin-left: 11px; width: 387px; }
.footer a { margin-left: 10px; color: #4fb0f8; }
.create {
  position: relative;
  z-index: 2;
  margin: 16px 0 0 auto;
  width: 206px;
  height: 52px;
  border-radius: 12px;
  background: linear-gradient(100deg, #1f8ee0 60%, #1b7ec8);
  color: #fff;
  font: 23.500px/53px "Liberation Sans", sans-serif;
  letter-spacing: -.5px;
  text-align: center;
}
.highlight {
  position: absolute;
  left: -3px;
  top: 0;
  width: 211px;
  height: 55px;
  border: 5px solid #ff2a00;
  border-radius: 22px;
}
.chat {
  position: absolute;
  right: -30px;
  bottom: 30px;
  width: 90px;
  height: 90px;
  padding: 22px 0 0 24px;
  border-radius: 50%;
  background: #1f8ee0;
  box-shadow: 0 2px 40px rgba(0, 0, 0, .16);
}
```
